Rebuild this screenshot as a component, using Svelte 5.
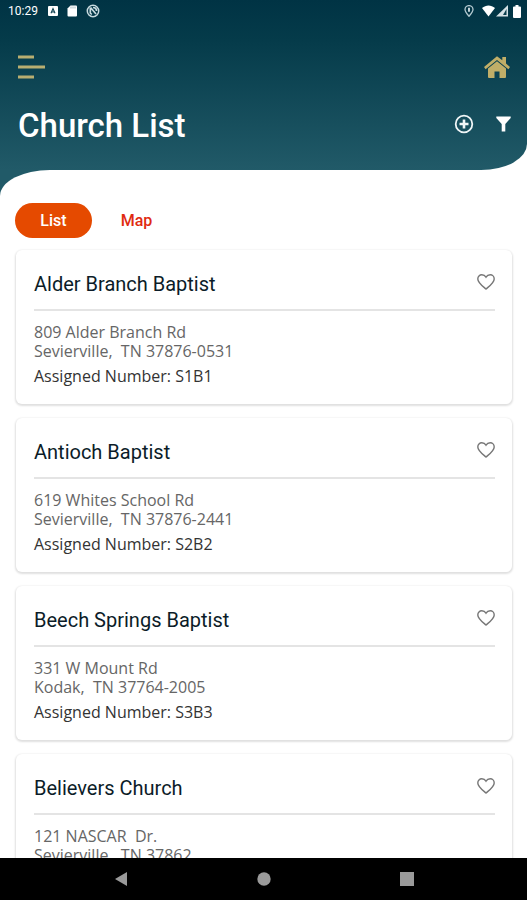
<script>
  let tab = 'list';

  let churches = [
    { name: 'Alder Branch Baptist', street: '809 Alder Branch Rd', city: 'Sevierville,  TN 37876-0531', number: 'S1B1', liked: false },
    { name: 'Antioch Baptist', street: '619 Whites School Rd', city: 'Sevierville,  TN 37876-2441', number: 'S2B2', liked: false },
    { name: 'Beech Springs Baptist', street: '331 W Mount Rd', city: 'Kodak,  TN 37764-2005', number: 'S3B3', liked: false },
    { name: 'Believers Church', street: '121 NASCAR  Dr.', city: 'Sevierville,  TN 37862', number: '', liked: false }
  ];

  function toggleLike(i) {
    churches[i].liked = !churches[i].liked;
    churches = [...churches];
  }
</script>

<div class="screen">
  <header>
    <!-- STATUS BAR -->
    <div class="status">
      <span class="time">10:29</span>
      <svg width="10" height="12" viewBox="0 0 10 12">
        <rect y="1" width="10" height="10" rx="1" fill="#fff" />
        <path d="M3 8.300 5 3.600l2 4.700M3.600 7h2.800" fill="none" stroke="#0a3d4c" stroke-width="1.100" />
      </svg>
      <svg width="10" height="12" viewBox="0 0 10 12">
        <path d="M3.500 0.500H9a1 1 0 0 1 1 1v9a1 1 0 0 1-1 1H1.500a1 1 0 0 1-1-1V3.500z" fill="#fff" />
        <path d="M4 1.500v2M6 1.500v2M8 1.500v2" stroke="#7d99a2" stroke-width=".7" />
      </svg>
      <svg width="14" height="14" viewBox="0 0 14 14" fill="none" stroke="#c9dbe0">
        <circle cx="7" cy="7" r="5.700" stroke-width="1.500" />
        <path d="M4.300 3.500v5.500l1.500 1.500M4.500 3.500l5.500 6.500M7 3.500c2 0 3.500 1.500 3.500 3.500" stroke-width="1.700" />
      </svg>
      <div class="signals">
        <svg class="pin" width="10" height="12" viewBox="0 0 10 12">
          <path d="M5 11.300C2.500 8.500 1 6.500 1 4.600a4 4 0 0 1 8 0C9 6.500 7.500 8.500 5 11.300z" fill="none" stroke="#b4cad1" stroke-width="1.300" />
          <path d="M5 2.800v4" stroke="#d9e6ea" stroke-width="1.800" />
        </svg>
        <svg width="13" height="12" viewBox="0 0 13 12">
          <path d="M0 3C4-.4 9-.4 13 3L6.500 11.500z" fill="#fff" />
        </svg>
        <svg width="12" height="12" viewBox="0 0 12 12">
          <path d="M12 0v11.500H0z" fill="#d5e1e5" />
          <path d="M10.500 4v6H7z" fill="#0a3d4c" />
        </svg>
        <svg class="battery" width="8" height="13" viewBox="0 0 8 13">
          <path d="M2.500 0h3v1.500H7a1 1 0 0 1 1 1V12a1 1 0 0 1-1 1H1a1 1 0 0 1-1-1V2.500a1 1 0 0 1 1-1h1.500z" fill="#fff" />
        </svg>
      </div>
    </div>

    <div class="bar">
      <button class="icon" aria-label="Menu">
        <svg width="27" height="26" viewBox="0 0 27 26" fill="#b8ae71">
          <path d="M0 1.500h16v3H0zM0 11.500h27v3H0zM0 21.500h16v3H0z" />
        </svg>
      </button>
      <button class="icon" aria-label="Home">
        <svg width="26" height="22" viewBox="0 0 26 22" fill="#c0ae68">
          <path d="M13 0.200 18.300 4.300V1H22v6.500L26 11 24.400 13.200 13 4 1.600 13.200 0 11z" />
          <path d="M13 5.300 22 12.600V21a1 1 0 0 1-1 1h-5.500v-6.500h-5V22H5a1 1 0 0 1-1-1v-8.400z" />
        </svg>
      </button>
    </div>

    <div class="heading">
      <h1>Church List</h1>
      <div class="actions">
        <button class="icon" aria-label="Add">
          <svg width="20" height="20" viewBox="0 0 20 20" fill="none" stroke="#f0f6f7">
            <circle cx="10" cy="10" r="8.300" stroke-width="1.800" />
            <path d="M10 5.500v9M5.500 10h9" stroke-width="2.600" />
          </svg>
        </button>
        <button class="icon" aria-label="Filter">
          <svg width="15" height="16" viewBox="0 0 15 16" fill="#fff">
            <path d="M.3.500h14.400v1.600L9.300 8v7.500H5.700V8L.3 2.100z" />
          </svg>
        </button>
      </div>
    </div>
  </header>

  <div class="sheet-wrap">
    <main>
      <div class="tabs">
        <button class:active={tab === 'list'} on:click={() => tab = 'list'}>List</button>
        <button class:active={tab === 'map'} on:click={() => tab = 'map'}>Map</button>
      </div>

      <div class="cards">
        {#each churches as church, i}
          <article>
            <div class="card-head">
              <h2>{church.name}</h2>
              <button class="icon" aria-label="Favorite {church.name}" on:click={() => toggleLike(i)}>
                <svg width="18" height="16" viewBox="0 0 18 16" fill={church.liked ? '#e54a00' : 'none'} stroke="#777" stroke-width="1.400">
                  <path d="M9 15C5.500 12 .8 8.600.8 4.900.8 2.500 2.600.8 4.800.8 6.600.8 8.100 1.700 9 3.200 9.900 1.700 11.400.8 13.200.8c2.200 0 4 1.700 4 4.100C17.200 8.600 12.500 12 9 15z" />
                </svg>
              </button>
            </div>
            <address>{church.street}<br />{church.city}</address>
            {#if church.number}
              <p>Assigned Number: {church.number}</p>
            {/if}
          </article>
        {/each}
      </div>
    </main>
  </div>

  <!-- ANDROID NAV -->
  <nav>
    <button class="icon" aria-label="Back">
      <svg width="14" height="16" viewBox="0 0 14 16"><path d="M13 1v14L1 8z" fill="#9a9a9a" /></svg>
    </button>
    <button class="icon" aria-label="Home screen">
      <svg width="14" height="16" viewBox="0 0 14 16"><circle cx="7" cy="8" r="6.700" fill="#9a9a9a" /></svg>
    </button>
    <button class="icon" aria-label="Recent apps">
      <svg width="14" height="16" viewBox="0 0 14 16"><path d="M0 1h14v14H0z" fill="#9a9a9a" /></svg>
    </button>
  </nav>
</div>

<style>
  :global(body) {
    margin: 0;
    background: #fff;
  }

  .screen {
    display: flex;
    flex-direction: column;
    height: 100vh;
    background: #fff;
    font-family: Roboto, "Liberation Sans", sans-serif;
  }

  button {
    border: none;
    padding: 0;
    background: none;
    font-family: inherit;
    cursor: pointer;
  }

  .icon, svg {
    display: block;
  }

  /* HEADER */
  header {
    background: linear-gradient(#003344, #053b4a 24%, #215a68);
    border-bottom-right-radius: 46px 26px;
    color: #fff;
  }

  .status {
    display: flex;
    align-items: center;
    height: 22px;
    padding: 0 6px 0 8px;
    gap: 9px;
  }

  .time {
    font-size: 12px;
    margin-right: 1px;
  }

  .signals {
    display: flex;
    align-items: center;
    gap: 1px;
    margin-left: auto;
  }

  .pin {
    margin-right: 7px;
  }

  .battery {
    margin-left: 4px;
  }

  .bar {
    display: flex;
    align-items: center;
    justify-content: space-between;
    padding: 32px 17px 0 18px;
  }

  .heading {
    display: flex;
    align-items: center;
    justify-content: space-between;
    padding: 26px 16px 24px 18px;
  }

  h1 {
    margin: 0;
    font-size: 33px;
    line-height: 40px;
    font-weight: 500;
  }

  .actions {
    display: flex;
    align-items: center;
    gap: 22px;
    padding-bottom: 4px;
  }

  /* SHEET */
  .sheet-wrap {
    flex: 1;
    min-height: 0;
    background: linear-gradient(#215a68 30px, #fff 30px);
  }

  main {
    height: 100%;
    overflow: hidden;
    background: #fff;
    border-top-left-radius: 50px 26px;
  }

  .tabs {
    display: flex;
    gap: 6px;
    padding: 33px 15px 0;
  }

  .tabs button {
    width: 77px;
    height: 35px;
    border-radius: 18px;
    color: #e02a10;
    font-size: 16px;
    line-height: 20px;
    font-weight: 500;
  }

  .tabs button.active {
    background: #e54a00;
    color: #fff;
  }

  .cards {
    display: flex;
    flex-direction: column;
    gap: 14px;
    padding: 12px 15px 0 16px;
  }

  article {
    padding: 18px 17px 18px 18px;
    border-radius: 6px;
    background: #fff;
    box-shadow: 0 1px 2px 1px #e0e0e0;
  }

  .card-head {
    display: flex;
    align-items: center;
    justify-content: space-between;
    padding-bottom: 9px;
    margin-bottom: 12px;
    border-bottom: 2px solid #e4e4e4;
  }

  .card-head .icon {
    padding-bottom: 4px;
  }

  h2 {
    margin: 0;
    font-size: 20px;
    line-height: 32px;
    font-weight: 400;
    color: #0c1c28;
  }

  address, p {
    margin: 0;
    font-family: "Open Sans", "Noto Sans", sans-serif;
    font-size: 16px;
    line-height: 19px;
    font-style: normal;
    white-space: pre-wrap;
    color: #666;
  }

  p {
    margin-top: 6px;
    color: #333;
  }

  /* NAV */
  nav {
    display: flex;
    align-items: center;
    height: 42px;
    padding: 0 49px;
    background: #000;
  }

  nav .icon {
    display: flex;
    flex: 1;
    justify-content: center;
  }
</style>
